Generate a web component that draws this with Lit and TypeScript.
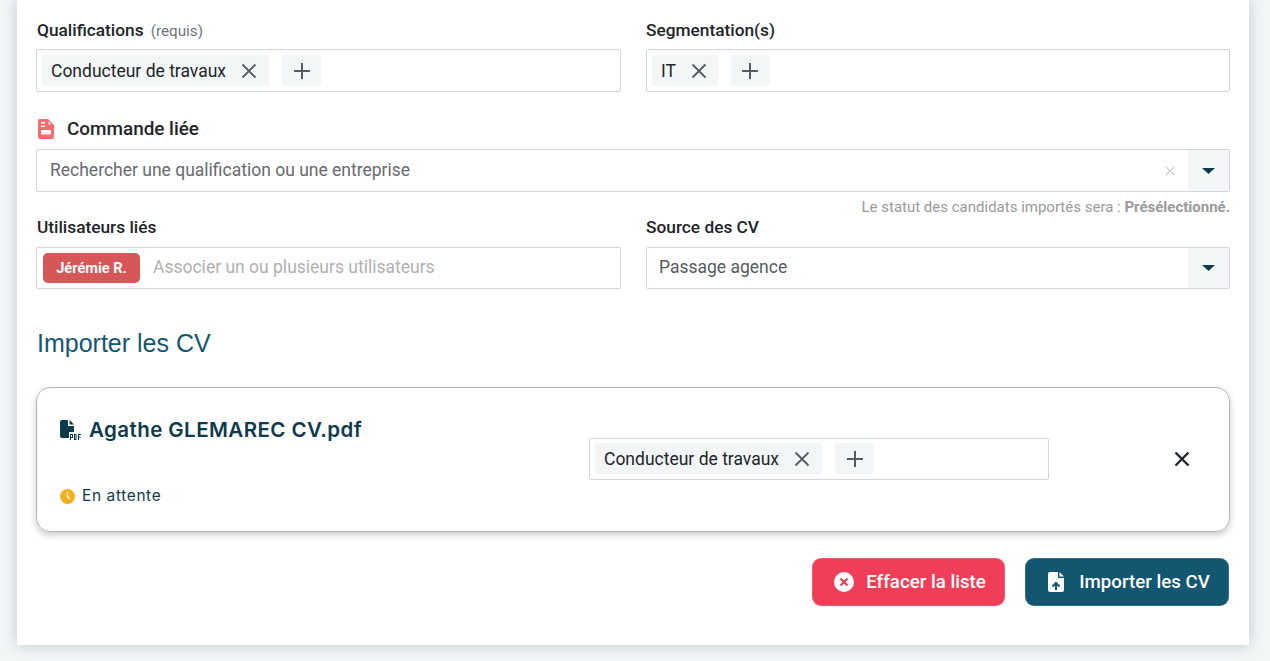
import { LitElement, html, css, svg } from "lit";
import { customElement } from "lit/decorators.js";

const x = (s: number, w = 1.8) => html`<svg width=${s} height=${s} viewBox="0 0 16 16" fill="none" stroke="currentColor" stroke-width=${w}><path d="M1.500 1.500 14.500 14.500M14.500 1.500 1.500 14.500"/></svg>`;
const plus = html`<svg width="16" height="16" viewBox="0 0 16 16" fill="none" stroke="currentColor" stroke-width="2"><path d="M8 0V16M0 8H16"/></svg>`;
const caret = html`<svg width="13" height="6" viewBox="0 0 13 6"><path d="M0 0H13L6.500 6Z" fill="#0e3a4d"/></svg>`;
const fileShape = svg`<path d="M2 0H10V6H16V18a2 2 0 0 1-2 2H2a2 2 0 0 1-2-2V2a2 2 0 0 1 2-2ZM11.500 0 16 4.500H11.500Z"/>`;

@customElement("app-root")
export class AppRoot extends LitElement {
  static styles = css`
    :host { display: block; height: 661px; overflow: hidden; background: #f2f6f7; font-family: Roboto, sans-serif; color: #212529; }
    .panel { width: 1232px; height: 645px; box-sizing: border-box; margin-left: 17px; padding: 21px 19px 0; background: #fff; box-shadow: 0 0 14px rgba(60,80,90,.28); display: flex; flex-direction: column; }
    .row { display: grid; grid-template-columns: 585px 584px; column-gap: 25px; }
    .label { font-size: 17.3px; font-weight: 500; line-height: 18px; height: 20px; margin-bottom: 8px; color: #212529; }
    .first { padding-left: 1px; }
    .label small { font-size: 15.2px; font-weight: 400; color: #6c757d; margin-left: 3px; }
    .box { height: 43px; box-sizing: border-box; border: 1px solid #d3d4e0; border-radius: 2px; display: flex; align-items: center; background: #fff; }
    .tags { padding-left: 5px; gap: 13px; }
    .tag { height: 31px; background: #f3f6f7; border-radius: 3px; display: flex; align-items: center; font-size: 17.5px; padding: 0 12px 0 9px; gap: 15px; color: #212529; white-space: nowrap; }
    .short { padding-right: 11px; }
    .tag svg { color: #555b60; flex: none; }
    .add { height: 31px; width: 39px; background: #f3f6f7; border-radius: 3px; display: flex; align-items: center; justify-content: center; color: #555b60; }
    .linked { display: flex; align-items: center; height: 20px; margin: 27px 0 10px; font-size: 18.9px; font-weight: 500; gap: 13px; }
    .linked svg { margin-left: 2px; }
    .linked span { margin-bottom: 2px; }
    .search { justify-content: space-between; font-size: 17.5px; color: #666b70; padding-left: 13px; }
    .lift { margin-bottom: 2px; }
    .ends { display: flex; align-items: center; height: 100%; color: #c4c7ca; gap: 13px; }
    .drop { width: 41px; height: 100%; background: #f3f6f7; display: flex; align-items: center; justify-content: center; }
    .note { text-align: right; font-size: 15px; line-height: 16px; height: 16px; margin: 7px 0 3px; color: #9a9a9a; }
    .note b { font-weight: 700; }
    .h42 { height: 42px; }
    .row2 .label { margin-bottom: 9px; }
    .person { height: 30px; width: 97px; margin-left: 6px; background: #d65757; color: #fff; border-radius: 5px; font-size: 14.6px; font-weight: 700; display: flex; align-items: center; justify-content: center; }
    .ph { font-size: 17.5px; color: #b0b0b0; margin-left: 13px; }
    .src { font-size: 17.5px; color: #555b60; padding-left: 12px; justify-content: space-between; }
    h2 { font-family: "Liberation Sans", sans-serif; font-weight: 400; font-size: 25px; line-height: 28px; color: #125670; margin: 40px 0 30px; padding-left: 1px; }
    .card { height: 145px; box-sizing: border-box; border: 1px solid #b5b5b5; border-radius: 14px; box-shadow: 0 3px 7px rgba(0,0,0,.2); display: grid; grid-template-columns: 552px 460px 1fr; align-items: center; }
    .info { height: 100%; display: flex; flex-direction: column; padding-left: 23px; box-sizing: border-box; }
    .file { display: flex; align-items: center; gap: 8px; margin-top: 30px; color: #0e3a4d; font-family: Inter, sans-serif; font-weight: 600; font-size: 20.5px; line-height: 24px; letter-spacing: .43px; }
    .status { display: flex; align-items: center; gap: 7px; margin-top: 45px; font-family: Inter, sans-serif; font-size: 15.4px; line-height: 18px; color: #0e3a4d; letter-spacing: .65px; }
    .cardbox { margin-bottom: 2px; }
    .close { display: flex; justify-content: flex-end; color: #212529; padding-right: 39px; margin-bottom: 2px; }
    .actions { display: flex; justify-content: flex-end; gap: 20px; margin: 26px 1px 0 0; }
    button { height: 48px; border: 1px solid rgba(255,255,255,.15); border-radius: 9px; color: #fff; font: 500 18.7px Roboto, sans-serif; display: flex; align-items: center; justify-content: center; gap: 12px; padding: 0 0 0 3px; }
    .red { width: 193px; background: #f03e58; }
    .blue { width: 204px; background: #125670; gap: 15px; padding-left: 4px; }
  `;

  private tag(t: string, short = false) {
    return html`<div class="tag ${short ? "short" : ""}"><span>${t}</span>${x(16)}</div><div class="add">${plus}</div>`;
  }

  render() {
    return html`<div class="panel">
      <div class="row">
        <div><div class="label first">Qualifications <small>(requis)</small></div><div class="box tags">${this.tag("Conducteur de travaux")}</div></div>
        <div><div class="label">Segmentation(s)</div><div class="box tags">${this.tag("IT", true)}</div></div>
      </div>
      <div class="linked">
        <svg width="16" height="20" viewBox="0 0 16 20" fill="#fb6a6e"><path fill-rule="evenodd" d="M2 0H10L16 6V18a2 2 0 0 1-2 2H2a2 2 0 0 1-2-2V2a2 2 0 0 1 2-2ZM3 3V4.500H7V3ZM3 6.500V8H7V6.500ZM10.500 2.500V5.500H13.500ZM3 11V15.500H13V11Z"/></svg>
        <span>Commande liée</span>
      </div>
      <div class="box search"><span class="lift">Rechercher une qualification ou une entreprise</span><div class="ends">${x(10, 1.8)}<div class="drop">${caret}</div></div></div>
      <div class="note">Le statut des candidats importés sera : <b>Présélectionné.</b></div>
      <div class="row row2">
        <div><div class="label first">Utilisateurs liés</div><div class="box h42"><div class="person">Jérémie R.</div><span class="ph lift">Associer un ou plusieurs utilisateurs</span></div></div>
        <div><div class="label">Source des CV</div><div class="box h42 src"><span class="lift">Passage agence</span><div class="drop">${caret}</div></div></div>
      </div>
      <h2>Importer les CV</h2>
      <div class="card">
        <div class="info">
          <div class="file">
            <svg width="21" height="20" viewBox="0 0 21 20" fill="#0e3a4d"><path fill-rule="evenodd" d="M2 0H8V6H14V12H9V18H2a2 2 0 0 1-2-2V2a2 2 0 0 1 2-2ZM9.500 0 14 4.500H9.500Z"/><path fill-rule="evenodd" d="M10 14H13V18H11V20H10ZM11 15V17H12V15ZM14 14H16.500V20H14ZM15 15V19H15.500V15ZM18 14H21V15H19V16.500H20.500V17.500H19V20H18Z"/></svg>
            Agathe GLEMAREC CV.pdf
          </div>
          <div class="status">
            <svg width="15" height="15" viewBox="0 0 15 15"><circle cx="7.500" cy="7.500" r="7.500" fill="#f2b01e"/><path d="M7.500 3V7.500L10 10" fill="none" stroke="#fff" stroke-width="1.300"/></svg>
            En attente
          </div>
        </div>
        <div class="box tags h42 cardbox">${this.tag("Conducteur de travaux")}</div>
        <div class="close">${x(16, 2.4)}</div>
      </div>
      <div class="actions">
        <button class="red"><svg width="20" height="20" viewBox="0 0 20 20"><circle cx="10" cy="10" r="10" fill="#fff"/><path d="M6.500 6.500 13.500 13.500M13.500 6.500 6.500 13.500" stroke="#f03e58" stroke-width="2.200"/></svg>Effacer la liste</button>
        <button class="blue"><svg width="16" height="20" viewBox="0 0 16 20"><g fill="#fff" fill-rule="evenodd">${fileShape}</g><path d="M8 18V11M4.500 14.500 8 11 11.500 14.500" fill="none" stroke="#125670" stroke-width="2"/></svg>Importer les CV</button>
      </div>
    </div>`;
  }
}
